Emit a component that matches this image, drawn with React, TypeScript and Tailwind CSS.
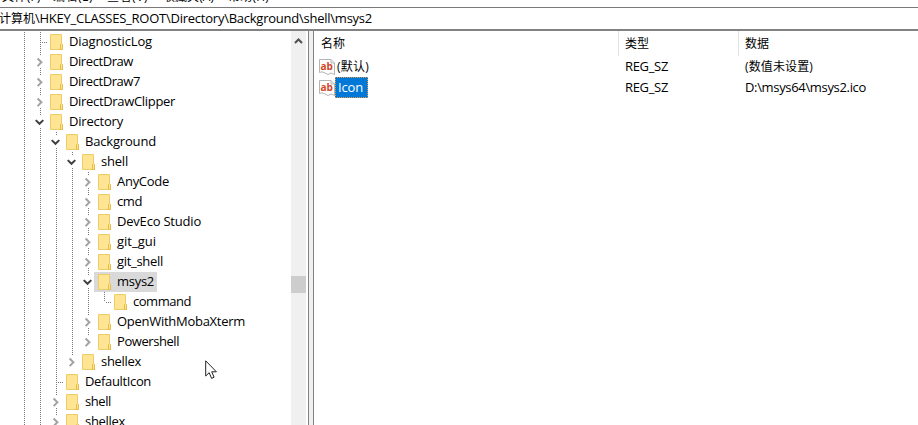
import { useLayoutEffect, useRef, useState } from 'react';

// Text whose letter spacing is adjusted so that it fills the given width.
function Fit({ text, width, className = '' }: { text: string; width: number; className?: string }) {
  const ref = useRef<HTMLSpanElement>(null);
  const [spacing, setSpacing] = useState(0);
  useLayoutEffect(() => {
    if (ref.current) {
      const natural = ref.current.getBoundingClientRect().width;
      setSpacing((width - natural) / text.length);
    }
  }, []);
  return (
    <span ref={ref} className={`inline-block shrink-0 whitespace-pre ${className}`} style={{ letterSpacing: spacing }}>
      {text}
    </span>
  );
}

type Guide = 'none' | 'line' | 'mid' | 'end' | 'closed' | 'closedEnd' | 'open';

function GuideCell({ kind }: { kind: Guide }) {
  const dots = { stroke: '#777', strokeDasharray: '1 1', fill: 'none' };
  const above = kind === 'closed' || kind === 'closedEnd' || kind === 'open';
  const below = kind === 'closed' || kind === 'open';
  return (
    <svg className="block h-5 w-4 shrink-0" viewBox="0 0 16 20">
      {(kind === 'line' || kind === 'mid') && <path d="M8.5 0V20" {...dots} />}
      {kind === 'end' && <path d="M8.5 0V10" {...dots} />}
      {(kind === 'mid' || kind === 'end') && <path d="M10 10.5H15" {...dots} />}
      {above && <path d="M8.5 0V4" {...dots} />}
      {below && <path d="M8.5 16V20" {...dots} />}
      {(kind === 'closed' || kind === 'closedEnd') && (
        <path d="M5.6 6.5L9.4 10.3L5.6 14.1" fill="none" stroke="#a3a3a3" strokeWidth="2" />
      )}
      {kind === 'open' && <path d="M3.7 8.1L7.5 11.8L11.3 8.1" fill="none" stroke="#404040" strokeWidth="2" />}
    </svg>
  );
}

function Folder() {
  return (
    <svg className="block h-5 w-[15px] shrink-0" viewBox="0 0 15 20">
      <path d="M2.5 2.5H13.5V11.5L14.5 12.5V17.5H2.5Z" fill="#ffe593" stroke="#edcb67" />
      <path d="M12.5 17.5V12.5L13.5 11.5L14.5 12.5V17.5Z" fill="#ffe48b" stroke="#e5bd4d" />
    </svg>
  );
}

type Row = { name: string; width: number; guides: Guide[]; selected?: boolean };

const L: Guide = 'line';
const rows: Row[] = [
  { name: 'DiagnosticLog', width: 83, guides: [L, 'mid'] },
  { name: 'DirectDraw', width: 64, guides: [L, 'closed'] },
  { name: 'DirectDraw7', width: 71, guides: [L, 'closed'] },
  { name: 'DirectDrawClipper', width: 106, guides: [L, 'closed'] },
  { name: 'Directory', width: 54, guides: [L, 'open'] },
  { name: 'Background', width: 71, guides: [L, L, 'open'] },
  { name: 'shell', width: 27, guides: [L, L, L, 'open'] },
  { name: 'AnyCode', width: 52, guides: [L, L, L, L, 'closed'] },
  { name: 'cmd', width: 25, guides: [L, L, L, L, 'closed'] },
  { name: 'DevEco Studio', width: 84, guides: [L, L, L, L, 'closed'] },
  { name: 'git_gui', width: 39, guides: [L, L, L, L, 'closed'] },
  { name: 'git_shell', width: 46, guides: [L, L, L, L, 'closed'] },
  { name: 'msys2', width: 37, guides: [L, L, L, L, 'open'], selected: true },
  { name: 'command', width: 58, guides: [L, L, L, L, L, 'end'] },
  { name: 'OpenWithMobaXterm', width: 128, guides: [L, L, L, L, 'closed'] },
  { name: 'Powershell', width: 62, guides: [L, L, L, L, 'closedEnd'] },
  { name: 'shellex', width: 40, guides: [L, L, L, 'closedEnd'] },
  { name: 'DefaultIcon', width: 66, guides: [L, L, 'mid'] },
  { name: 'shell', width: 26, guides: [L, L, 'closed'] },
  { name: 'shellex', width: 40, guides: [L, L, 'closed'] },
];

function ValueIcon() {
  return (
    <svg className="block h-[18px] w-4 shrink-0" viewBox="0 0 16 18">
      <path d="M.5 1.5H12L15.5 5V16.5L12 15L9 16.5L6 15L3 13.8L.5 14.5Z" fill="#fff" stroke="#b5b5b5" />
      <path d="M12 1.5V5H15.5" fill="none" stroke="#b5b5b5" />
      <text
        x="1.4"
        y="11.5"
        fontFamily="Open Sans, sans-serif"
        fontWeight="700"
        fontSize="10.5"
        textLength="12.4"
        lengthAdjust="spacingAndGlyphs"
        fill="#cf4728"
      >
        ab
      </text>
    </svg>
  );
}

const menus = [
  { text: '文件(F)', width: 51, fit: 39 },
  { text: '编辑(E)', width: 54, fit: 40 },
  { text: '查看(V)', width: 56, fit: 41 },
  { text: '收藏夹(A)', width: 65, fit: 51 },
  { text: '帮助(H)', width: 54, fit: 41 },
];

export default function App() {
  return (
    <div className="relative flex h-[425px] w-[918px] flex-col overflow-hidden bg-white text-[13px] leading-5 text-black [font-family:'Open_Sans','Noto_Sans_CJK_SC',sans-serif]">
      <div className="flex h-[7px] shrink-0 items-end overflow-hidden pl-[2px] text-[12px]">
        {menus.map((m) => (
          <div key={m.text} className="flex h-5 shrink-0 items-center" style={{ width: m.width }}>
            <Fit text={m.text} width={m.fit} />
          </div>
        ))}
      </div>
      <div className="flex h-[22px] shrink-0 items-center border-t border-[#7a7a7a]">
        <Fit text="计算机" width={36} className="-ml-px text-[12px]" />
        <Fit text="\HKEY_CLASSES_ROOT\Directory\Background\shell\msys2" width={337} className="-mt-px" />
      </div>
      <div className="h-[2px] shrink-0 bg-[#828282]" />
      <div className="flex min-h-0 flex-1">
        <div className="flex w-[309px] shrink-0 border-r border-[#828282]">
          <div className="flex w-[291px] flex-col overflow-hidden pt-px">
            {rows.map((row, i) => (
              <div key={i} className="flex h-5 shrink-0 items-center pl-4">
                {row.guides.map((g, j) => (
                  <GuideCell key={j} kind={g} />
                ))}
                <div className={`-ml-[2px] flex h-5 items-center gap-[6px] pl-[2px] pr-[3px] ${row.selected ? 'bg-[#d9d9d9]' : ''}`}>
                  <Folder />
                  <Fit text={row.name} width={row.width} className="-mt-[2px]" />
                </div>
              </div>
            ))}
          </div>
          <div className="flex w-[15px] flex-col bg-[#f0f0f0]">
            <svg className="h-[245px] w-[15px] shrink-0" viewBox="0 0 15 245">
              <path d="M4 12L7.5 8.5L11 12" fill="none" stroke="#505050" strokeWidth="2" />
            </svg>
            <div className="h-[17px] shrink-0 bg-[#cdcdcd]" />
          </div>
        </div>
        <div className="w-1 shrink-0 bg-[#f0f0f0]" />
        <div className="flex-1 border-l border-[#828282]">
          <div className="flex h-[25px] text-[12px]">
            <div className="flex h-[25px] w-[305px] items-center border-r border-[#e2e2e2] pl-[7px]">名称</div>
            <div className="flex h-[25px] w-[120px] items-center border-r border-[#e2e2e2] pl-[6px]">类型</div>
            <div className="flex h-[25px] items-center pl-[6px]">数据</div>
          </div>
          <div className="flex h-[21px] items-center pl-[5px]">
            <ValueIcon />
            <div className="w-[290px] pl-[2px] text-[12px]"><Fit text="(默认)" width={32} /></div>
            <div className="-mt-[2px] w-[120px]"><Fit text="REG_SZ" width={43} /></div>
            <Fit text="(数值未设置)" width={68} className="text-[12px]" />
          </div>
          <div className="flex h-[21px] items-center pl-[5px]">
            <ValueIcon />
            <div className="w-[290px]">
              <div className="flex h-[21px] w-[33px] items-center border border-dotted border-[#e29b4b] bg-[#0078d7] pl-[2px] text-white">
                <Fit text="Icon" width={25} className="-mt-[2px]" />
              </div>
            </div>
            <div className="-mt-[2px] w-[120px]"><Fit text="REG_SZ" width={43} /></div>
            <Fit text={'D:\\msys64\\msys2.ico'} width={121} className="-mt-[2px]" />
          </div>
        </div>
      </div>
      <svg className="absolute left-[205px] top-[360px] h-5 w-3" viewBox="0 0 12 20">
        <path d="M.7 .8V16L4.2 12.7L6.6 18.4L9.1 17.2L6.7 11.8H11.4Z" fill="#fff" stroke="#222" />
      </svg>
    </div>
  );
}
